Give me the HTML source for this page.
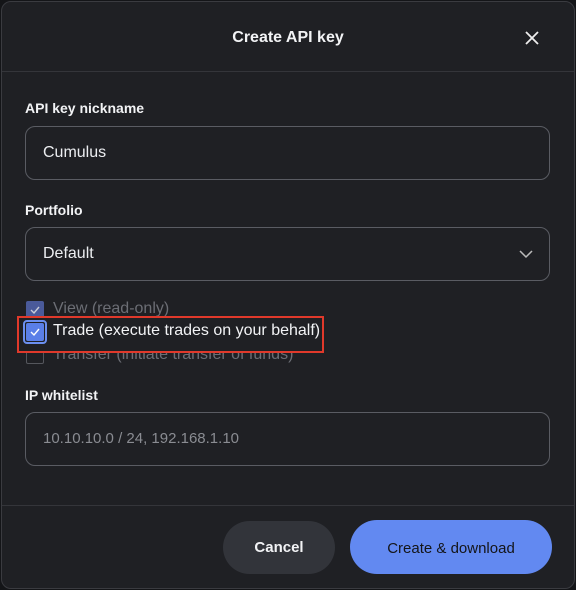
<!DOCTYPE html>
<html><head><style>
*{box-sizing:border-box;margin:0;padding:0}
body{width:576px;height:590px;background:#141518;font-family:"Liberation Sans",sans-serif;position:relative;overflow:hidden}
.m{position:absolute;left:1px;top:1px;width:574px;height:588px;background:#1f2024;border:1px solid #3a3b40;border-radius:10px}
.a{position:absolute}
.t{color:#f2f3f5}
.lbl{font-size:14px;font-weight:bold;color:#f2f3f5}
.in{position:absolute;left:25px;width:525px;height:54px;border:1px solid #5a5c63;border-radius:10px;font-size:16px;padding-left:17px;line-height:52px;color:#eceef1}
.hr{position:absolute;left:2px;right:2px;height:1px;background:#34353a}
.cb{position:absolute;width:18px;height:18px;border-radius:2px}
</style></head><body>
<div class="m"></div>
<div class="a t" style="left:0;width:576px;top:29px;text-align:center;font-size:16px;font-weight:bold">Create API key</div>
<svg class="a" style="left:524px;top:30px" width="16" height="16"><path d="M2 2L14 14M14 2L2 14" stroke="#eee" stroke-width="1.8"/></svg>
<div class="hr" style="top:71px"></div>
<div class="a lbl" style="left:25px;top:100px">API key nickname</div>
<div class="in" style="top:126px">Cumulus</div>
<div class="a lbl" style="left:25px;top:202px">Portfolio</div>
<div class="in" style="top:227px">Default</div>
<svg class="a" style="left:519px;top:249px" width="14" height="10"><path d="M1 2L7 8L13 2" stroke="#bbb" stroke-width="1.5" fill="none"/></svg>
<div class="cb" style="left:26px;top:301px;background:#4a5a9a"></div>
<svg class="a" style="left:29px;top:304px" width="12" height="12"><path d="M2 6L5 9L10 3" stroke="#c8ccd8" stroke-width="1.4" fill="none"/></svg>
<div class="a" style="left:53px;top:300px;font-size:16px;color:#6c6e75">View (read-only)</div>
<div class="cb" style="left:26px;top:346px;border:1.5px solid #55575d"></div>
<div class="a" style="left:53px;top:346px;font-size:16px;color:#6c6e75">Transfer (initiate transfer of funds)</div>
<div class="a" style="left:17px;top:316px;width:307px;height:37px;border:2px solid #e0392b;background:#1f2024"></div>
<div class="cb" style="left:23px;top:320px;width:24px;height:24px;border:2px solid #6b8ff0;border-radius:4px;background:#1f2024"></div>
<div class="cb" style="left:26px;top:323px;background:#5a7fe8;border-radius:2px"></div>
<svg class="a" style="left:29px;top:326px" width="12" height="12"><path d="M2 6L5 9L10 3" stroke="#fff" stroke-width="1.4" fill="none"/></svg>
<div class="a t" style="left:53px;top:322px;font-size:16px">Trade (execute trades on your behalf)</div>
<div class="a lbl" style="left:25px;top:387px">IP whitelist</div>
<div class="in" style="top:412px;color:#8a8c92;font-size:15px">10.10.10.0 / 24, 192.168.1.10</div>
<div class="hr" style="top:505px"></div>
<div class="a" style="left:223px;top:521px;width:112px;height:53px;border-radius:27px;background:#32343a;color:#f2f3f5;font-weight:bold;font-size:15px;text-align:center;line-height:54px">Cancel</div>
<div class="a" style="left:350px;top:520px;width:202px;height:54px;border-radius:27px;background:#6289f1;color:#141518;font-size:15px;text-align:center;line-height:57px">Create &amp; download</div>
</body></html>
